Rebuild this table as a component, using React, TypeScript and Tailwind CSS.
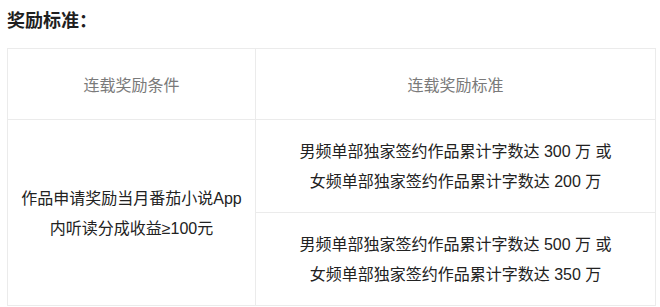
const font = { fontFamily: '"Liberation Sans", "Noto Sans CJK SC", sans-serif' }

const standards = [
  ['男频单部独家签约作品累计字数达 300 万 或', '女频单部独家签约作品累计字数达 200 万'],
  ['男频单部独家签约作品累计字数达 500 万 或', '女频单部独家签约作品累计字数达 350 万'],
]

export default function App() {
  return (
    <div className="h-[307px] w-[660px] overflow-hidden bg-white pl-[7px]" style={font}>
      <h2 className="pt-[8px] text-[18px] font-bold leading-[26px] text-[#1f1f1f]">奖励标准：</h2>

      <table className="mt-[14px] w-[649px] table-fixed border-collapse text-center text-[16px] leading-[30px]">
        <colgroup>
          <col className="w-[248px]" />
          <col />
        </colgroup>
        <thead>
          <tr className="h-[71px]">
            <th className="border border-[#ebebeb] pt-[4px] font-normal text-[#7a7a7a]">连载奖励条件</th>
            <th className="border border-[#ebebeb] pt-[4px] font-normal text-[#7a7a7a]">连载奖励标准</th>
          </tr>
        </thead>
        <tbody className="text-[#222]">
          {standards.map((lines, i) => (
            <tr key={i} className="h-[93px]">
              {i === 0 && (
                <td rowSpan={2} className="border border-[#ebebeb] pt-[2px]">
                  作品申请奖励当月番茄小说App
                  <br />
                  内听读分成收益≥100元
                </td>
              )}
              <td className="border border-[#ebebeb] pt-[2px]">
                {lines[0]}
                <br />
                {lines[1]}
              </td>
            </tr>
          ))}
        </tbody>
      </table>
    </div>
  )
}
